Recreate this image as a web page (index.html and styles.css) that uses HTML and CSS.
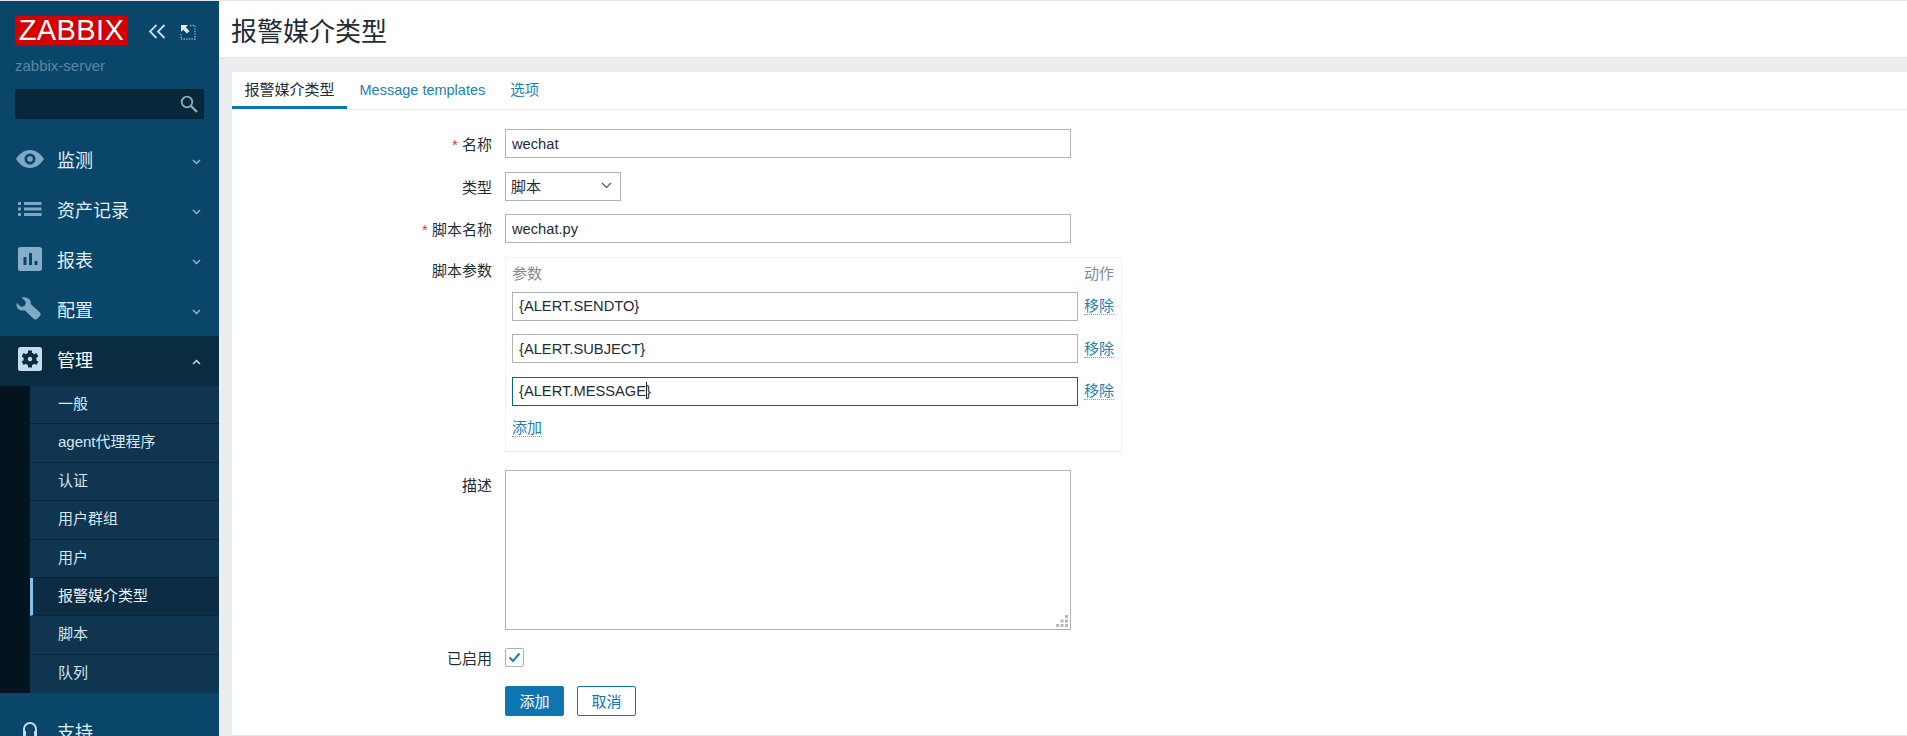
FILE: index.html
```html
<!DOCTYPE html>
<html lang="zh-CN">
<head>
    <meta charset="UTF-8">
    <title>报警媒介类型</title>
    <link rel="stylesheet" href="styles.css">
</head>
<body>

    <aside class="sidebar">
        <div class="brand">
            <span class="logo">ZABBIX</span>
            <svg class="brand-icon" width="19" height="15" viewBox="0 0 19 15"><path d="M8.500 1 2 7.500 8.500 14M16.500 1 10 7.500 16.500 14" fill="none" stroke="#c9dce8" stroke-width="1.800"/></svg>
            <svg class="brand-icon kiosk" width="16" height="16" viewBox="0 0 16 16"><path d="M10 1.500h5v13.500H1V10" fill="none" stroke="#8fb3ca" stroke-width="1.300" stroke-dasharray="1.300 1.300"/><path d="M1 1h7L5.800 3.200 9.500 6.900 6.900 9.500 3.200 5.800 1 8z" fill="#e2edf4"/></svg>
        </div>
        <div class="server-name">zabbix-server</div>
        <div class="search">
            <svg width="18" height="18" viewBox="0 0 18 18"><circle cx="7" cy="7" r="5.300" fill="none" stroke="#8fa9b9" stroke-width="1.800"/><path d="m11 11 6 6" stroke="#8fa9b9" stroke-width="2.400"/></svg>
        </div>

        <nav class="menu">
            <a class="menu-item">
                <svg class="menu-icon" width="28" height="20" viewBox="0 0 28 20"><path fill-rule="evenodd" d="M14 1c6 0 11 4 14 9-3 5-8 9-14 9S3 15 0 10c3-5 8-9 14-9zm0 3.500a5.500 5.500 0 1 0 0 11 5.500 5.500 0 0 0 0-11zm0 2.700a2.800 2.800 0 1 1 0 5.600 2.800 2.800 0 0 1 0-5.600z" fill="#7fa8c4"/></svg>
                <span class="menu-text">监测</span>
                <svg class="chevron" width="9" height="6" viewBox="0 0 9 6"><path d="m1 1 3.500 3.500L8 1" fill="none" stroke="#8db4ce" stroke-width="1.500"/></svg>
            </a>
            <a class="menu-item">
                <svg class="menu-icon" width="28" height="14" viewBox="0 0 28 14"><path d="M2 0h3v3H2zM2 5.500h3v3H2zM2 11h3v3H2zM8 0h17.500v3H8zM8 5.500h17.500v3H8zM8 11h17.500v3H8z" fill="#7fa8c4"/></svg>
                <span class="menu-text">资产记录</span>
                <svg class="chevron" width="9" height="6" viewBox="0 0 9 6"><path d="m1 1 3.500 3.500L8 1" fill="none" stroke="#8db4ce" stroke-width="1.500"/></svg>
            </a>
            <a class="menu-item">
                <svg class="menu-icon" width="28" height="24" viewBox="0 0 28 24"><path fill-rule="evenodd" d="M4.500 0h19A2.500 2.500 0 0 1 26 2.500v19a2.500 2.500 0 0 1-2.500 2.500h-19A2.500 2.500 0 0 1 2 21.500v-19A2.500 2.500 0 0 1 4.500 0zM7.500 10v8h3v-8zM13 6v12h3V6zM18.500 14v4h3v-4z" fill="#86aec9"/></svg>
                <span class="menu-text">报表</span>
                <svg class="chevron" width="9" height="6" viewBox="0 0 9 6"><path d="m1 1 3.500 3.500L8 1" fill="none" stroke="#8db4ce" stroke-width="1.500"/></svg>
            </a>
            <a class="menu-item">
                <svg class="menu-icon" width="28" height="23" viewBox="0 0 28 23"><path d="M9.500 .5C8 .2 6.800.4 5.800.8L10 5 8.800 8.800 5 10 .8 5.800C.2 7.500.4 9.800 1.800 11.500c1.800 2 4.500 2.500 6.800 1.700l9 8.500c1.200 1.100 3 1 4-.2l2.300-2.400c1.100-1.100 1-2.800-.2-3.900l-9-8.200c.6-3-1-5.700-5.200-6.500z" fill="#7fa8c4"/></svg>
                <span class="menu-text">配置</span>
                <svg class="chevron" width="9" height="6" viewBox="0 0 9 6"><path d="m1 1 3.500 3.500L8 1" fill="none" stroke="#8db4ce" stroke-width="1.500"/></svg>
            </a>
            <a class="menu-item open">
                <svg class="menu-icon" width="28" height="24" viewBox="0 0 28 24"><rect x="2" width="24" height="24" rx="2.500" fill="#c6dcea"/><circle cx="14" cy="12" r="6.500" fill="#0a2c41"/><path d="M14 12V3.500M14 12v8.500M14 12 6.600 7.750M14 12l7.400 4.250M14 12l-7.400 4.250M14 12l7.400-4.250" stroke="#0a2c41" stroke-width="4"/><circle cx="14" cy="12" r="2.200" fill="#c6dcea"/></svg>
                <span class="menu-text">管理</span>
                <svg class="chevron" width="9" height="6" viewBox="0 0 9 6"><path d="m1 5 3.500-3.500L8 5" fill="none" stroke="#c6dcea" stroke-width="1.500"/></svg>
            </a>
            <ul class="submenu">
                <li>一般</li>
                <li>agent代理程序</li>
                <li>认证</li>
                <li>用户群组</li>
                <li>用户</li>
                <li class="selected">报警媒介类型</li>
                <li>脚本</li>
                <li>队列</li>
            </ul>
            <a class="menu-item support">
                <svg class="menu-icon" width="28" height="22" viewBox="0 0 28 22"><path d="M8 15V9a6 6 0 0 1 12 0v6" fill="none" stroke="#c6dcea" stroke-width="2"/><rect x="7" y="11" width="3" height="7" fill="#c6dcea"/><rect x="18" y="11" width="3" height="7" fill="#c6dcea"/></svg>
                <span class="menu-text">支持</span>
            </a>
        </nav>
    </aside>

    <main class="content">
        <header class="page-title">
            <h1>报警媒介类型</h1>
        </header>

        <section class="card">
            <div class="tabs">
                <a class="tab active">报警媒介类型</a>
                <a class="tab">Message templates</a>
                <a class="tab">选项</a>
            </div>

            <form class="form">
                <label class="form-label"><span class="required">*</span> 名称</label>
                <input class="text-input wide" type="text" value="wechat">

                <label class="form-label">类型</label>
                <div class="select-wrap">
                    <select class="select-input"><option>脚本</option></select>
                    <svg class="select-arrow" width="11" height="7" viewBox="0 0 11 7"><path d="m1 1 4.500 4.500L10 1" fill="none" stroke="#4a555c" stroke-width="1.200"/></svg>
                </div>

                <label class="form-label"><span class="required">*</span> 脚本名称</label>
                <input class="text-input wide" type="text" value="wechat.py">

                <label class="form-label top">脚本参数</label>
                <div class="params">
                    <div class="params-head">
                        <span>参数</span>
                        <span>动作</span>
                    </div>
                    <div class="params-row">
                        <input class="text-input" type="text" value="{ALERT.SENDTO}">
                        <a class="link">移除</a>
                    </div>
                    <div class="params-row">
                        <input class="text-input" type="text" value="{ALERT.SUBJECT}">
                        <a class="link">移除</a>
                    </div>
                    <div class="params-row">
                        <div class="text-input focused">{ALERT.MESSAGE<span class="caret"></span>}</div>
                        <a class="link">移除</a>
                    </div>
                    <a class="link add">添加</a>
                </div>

                <label class="form-label top desc-label">描述</label>
                <div class="description-wrap">
                    <textarea class="description"></textarea>
                    <svg class="grip" width="13" height="13" viewBox="0 0 13 13"><path d="M9 0h3v3H9zM4.500 4.500h3v3h-3zM9 4.500h3v3H9zM0 9h3v3H0zM4.500 9h3v3h-3zM9 9h3v3H9z" fill="#b4b9bc"/></svg>
                </div>

                <label class="form-label">已启用</label>
                <span class="checkbox">
                    <svg width="13" height="11" viewBox="0 0 13 11"><path d="m1.500 5.500 3.500 3.500 6.500-7.500" fill="none" stroke="#1f7fb0" stroke-width="2"/></svg>
                </span>

                <span></span>
                <div class="buttons">
                    <button type="button" class="btn primary">添加</button>
                    <button type="button" class="btn">取消</button>
                </div>
            </form>
        </section>
    </main>

</body>
</html>
```

FILE: styles.css
```css
html, body {
    height: 736px;
    overflow: hidden;
}
body {
    margin: 0;
    display: flex;
    background-color: #ebeef0;
    color: #1f2c33;
    font-family: "Liberation Sans", "Noto Sans CJK SC", sans-serif;
    font-size: 15px;
}

/* sidebar */
.sidebar {
    width: 219px;
    flex: none;
    height: 736px;
    overflow: hidden;
    background-color: #0a466a;
    border-top: 1px solid #dfe6ea;
    box-sizing: border-box;
}
.brand {
    display: flex;
    align-items: center;
    padding: 15px 0 0 15px;
}
.logo {
    width: 113px;
    height: 29px;
    background-color: #d40000;
    color: #fff;
    font-size: 29px;
    line-height: 29px;
    letter-spacing: 0.4px;
    text-align: center;
}
.brand-icon {
    margin-left: 20px;
    margin-top: 2px;
}
.brand-icon.kiosk {
    margin-left: 13px;
}
.server-name {
    margin: 12px 0 0 15px;
    color: #5a87a3;
    font-size: 15px;
    line-height: 18px;
}
.search {
    display: flex;
    align-items: center;
    justify-content: flex-end;
    height: 30px;
    margin: 14px 15px 0;
    padding-right: 5px;
    background-color: #07273a;
    border: 1px solid #052030;
    border-radius: 2px;
    box-sizing: border-box;
}
.menu {
    margin-top: 17px;
}
.menu-item {
    display: flex;
    align-items: center;
    height: 50px;
    box-sizing: border-box;
    padding: 0 0 5px 16px;
    color: #e4eef5;
}
.menu-icon {
    width: 28px;
    flex: none;
}
.menu-text {
    margin-left: 13px;
    font-size: 18px;
    flex: 1;
}
.chevron {
    margin: 7px 18px 0 0;
}
.menu-item.open {
    background-color: #0a2c41;
    color: #fff;
}
.submenu {
    margin: 0;
    padding: 0;
    list-style: none;
    border-left: 30px solid #04141e;
    background-color: #0f3550;
}
.submenu li {
    height: 38.400px;
    line-height: 36px;
    padding-left: 28px;
    box-sizing: border-box;
    border-bottom: 1px solid #0a2434;
    color: #d8e6ef;
}
.submenu li:last-child {
    border-bottom: none;
}
.submenu li.selected {
    background-color: #0c2c43;
    border-left: 3px solid #83c3ee;
    padding-left: 25px;
    color: #eaf2f7;
}
.menu-item.support {
    margin-top: 15px;
}

/* main area */
.content {
    flex: 1;
    min-width: 0;
}
.page-title {
    height: 56px;
    border-top: 1px solid #e4e9ec;
    background-color: #fff;
    border-bottom: 1px solid #e1e6e9;
    padding-left: 12px;
    display: flex;
    align-items: center;
}
h1 {
    margin: 0;
    font-size: 26px;
    font-weight: normal;
    color: #1f2c33;
}
.card {
    margin: 14px 0 0 13px;
    height: 663px;
    background-color: #fff;
    border-bottom: 1px solid #dfe4e7;
}
.tabs {
    display: flex;
    height: 37px;
    border-bottom: 1px solid #ebeef0;
}
.tab {
    padding: 0 12.500px;
    line-height: 36px;
    font-size: 14.500px;
    color: #1f7fb0;
}
.tab.active {
    font-size: 15px;
    color: #1f2c33;
    height: 37px;
    box-sizing: border-box;
    border-bottom: 3px solid #0f75b0;
}
.form {
    display: grid;
    grid-template-columns: 260px 1fr;
    column-gap: 13px;
    row-gap: 13.500px;
    align-items: center;
    justify-items: start;
    padding-top: 19px;
}
.form-label {
    justify-self: end;
    color: #1f2c33;
}
.form-label.top {
    align-self: start;
    margin-top: 2px;
}
.form-label.desc-label {
    margin-top: 9px;
}
.required {
    color: #dc3a3a;
}
.text-input {
    display: block;
    flex: none;
    width: 566px;
    height: 29px;
    padding: 0 6px;
    box-sizing: border-box;
    border: 1px solid #acb3b8;
    background: #fff;
    color: #1f2c33;
    font: 14.700px/27px "Liberation Sans", "Noto Sans CJK SC", sans-serif;
    outline: none;
}
.select-wrap {
    position: relative;
    height: 29px;
}
.select-input {
    display: block;
    appearance: none;
    width: 116px;
    height: 29px;
    padding-left: 5px;
    border: 1px solid #acb3b8;
    border-radius: 0;
    background-color: #fff;
    color: #1f2c33;
    font: 15px "Liberation Sans", "Noto Sans CJK SC", sans-serif;
}
.select-arrow {
    position: absolute;
    right: 9px;
    top: 10px;
}
.params {
    width: 617px;
    height: 195px;
    padding: 0 6px;
    box-sizing: border-box;
    border: 1px solid #f0f2f3;
    border-bottom: 1px solid #e6e9eb;
}
.params-head {
    display: flex;
    justify-content: space-between;
    height: 34px;
    line-height: 31px;
    padding-right: 1px;
    color: #7f8b92;
}
.params-row {
    display: flex;
    align-items: center;
    gap: 6px;
    margin-bottom: 13.500px;
}
.focused {
    border-color: #0f6285;
}
.caret {
    display: inline-block;
    width: 1px;
    height: 17px;
    margin-right: -1px;
    vertical-align: -3px;
    background-color: #1f2c33;
}
.link {
    color: #1f7fb0;
    border-bottom: 1px dotted #6fa8c8;
    line-height: 17px;
}
.add {
    display: inline-block;
    margin-top: -1px;
}
.description-wrap {
    position: relative;
    margin-top: 4.500px;
}
.description {
    display: block;
    width: 566px;
    height: 160px;
    padding: 6px;
    box-sizing: border-box;
    border: 1px solid #acb3b8;
    border-radius: 0;
    resize: none;
}
.grip {
    position: absolute;
    right: 2px;
    bottom: 2px;
}
.checkbox {
    display: flex;
    align-items: center;
    justify-content: center;
    width: 19px;
    height: 19px;
    margin: 5px 0;
    box-sizing: border-box;
    border: 1px solid #acb3b8;
    border-radius: 2px;
}
.buttons {
    display: flex;
    gap: 13px;
}
.btn {
    width: 59px;
    height: 30px;
    padding: 0;
    background-color: #fff;
    border: 1px solid #0f75b0;
    border-radius: 2px;
    color: #0f75b0;
    font: 15px "Liberation Sans", "Noto Sans CJK SC", sans-serif;
}
.btn.primary {
    background-color: #0f75b0;
    color: #fff;
}
```
